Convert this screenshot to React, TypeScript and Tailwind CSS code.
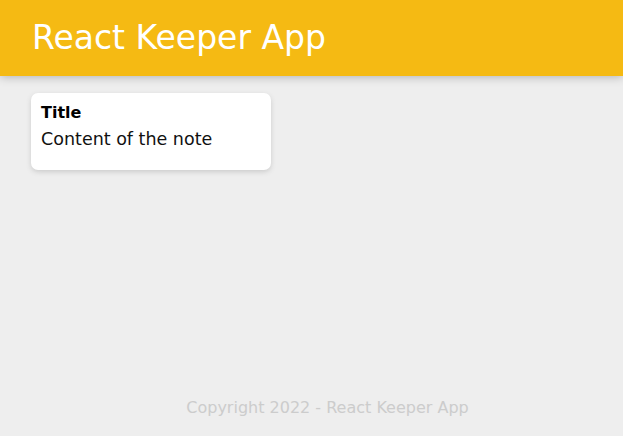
export default function App() {
    return (
        <div className="relative min-h-[436px] bg-[#eeeeee] px-4" style={{ fontFamily: '"DejaVu Sans", sans-serif' }}>
            <header className="-mx-4 flex h-[76px] items-center bg-[#f5ba13] px-8 shadow-[0_0_10px_0_rgba(0,0,0,0.3)]">
                <h1 className="text-[33px] font-normal text-white">React Keeper App</h1>
            </header>

            <div className="flex">
                <div className="my-[17px] ml-[15px] w-[240px] rounded-[7px] bg-white p-[10px] shadow-[0_2px_5px_#ccc]">
                    <h1 className="mb-[6px] text-[16px] font-semibold leading-[20px] text-black">Title</h1>
                    <p className="mb-[10px] text-[17.5px] leading-[21px] text-[#111]">Content of the note</p>
                </div>
            </div>

            <footer className="absolute bottom-0 left-4 flex h-10 w-full justify-center">
                <p className="text-[16px] text-[#cccccc]">Copyright 2022 - React Keeper App</p>
            </footer>
        </div>
    );
}
